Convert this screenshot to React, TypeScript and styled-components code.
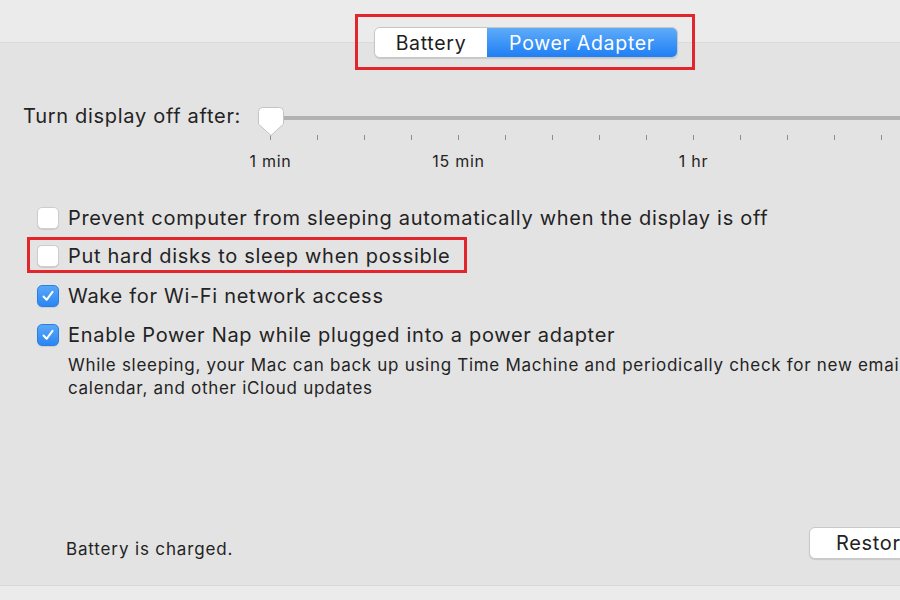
import React from "react";
import styled, { createGlobalStyle } from "styled-components";

const GlobalStyle = createGlobalStyle`
  html, body {
    margin: 0;
    padding: 0;
    overflow: hidden;
    background: #ebebeb;
  }
  body {
    font-family: Inter, Roboto, "Liberation Sans", sans-serif;
    color: #232323;
    letter-spacing: 0.7px;
  }
`;

const Viewport = styled.div`
  width: 900px;
  height: 600px;
  overflow: hidden;
`;

const Window = styled.div`
  width: 1050px;
  height: 600px;
  display: flex;
  flex-direction: column;
  background: #ebebeb;
`;

const TabHeader = styled.div`
  display: flex;
  justify-content: center;
  margin-top: 14px;
  margin-bottom: -28px;
  position: relative;
  z-index: 1;
`;

const Highlight = styled.div`
  border: 3px solid #e3262c;
  display: flex;
  padding: 10px 14px 9px 16px;
`;

const Segmented = styled.div`
  display: flex;
  height: 31px;
  border-radius: 6px;
  overflow: hidden;
  border: 1px solid #c6c6c6;
  box-shadow: 0 1px 1px rgba(0, 0, 0, 0.12);
  box-sizing: border-box;
`;

const Segment = styled.div<{ $active?: boolean }>`
  display: flex;
  align-items: center;
  justify-content: center;
  width: ${({ $active }) => ($active ? "190px" : "112px")};
  font-size: 19.5px;
  color: ${({ $active }) => ($active ? "#ffffff" : "#1d1d1d")};
  background: ${({ $active }) =>
    $active ? "linear-gradient(#5eabf9, #1f7ff5)" : "#ffffff"};
`;

const TabBox = styled.div`
  flex: 1;
  background: #e3e3e3;
  border-top: 1px solid #dadada;
  border-bottom: 1px solid #d8d8d8;
  display: flex;
  flex-direction: column;
  margin-bottom: 14px;
`;

const SliderRow = styled.div`
  display: flex;
  align-items: flex-start;
  padding-left: 23px;
  margin-top: 60px;
`;

const SliderLabel = styled.div`
  width: 235px;
  font-size: 20px;
  line-height: 26px;
  white-space: nowrap;
`;

const Slider = styled.div`
  flex: 1;
  margin-top: 4px;
  display: flex;
  flex-direction: column;
`;

const TrackArea = styled.div`
  position: relative;
  height: 28px;
`;

const Track = styled.div`
  margin-top: 9px;
  height: 4px;
  border-radius: 2px;
  background: #b2b2b2;
  margin-right: 30px;
`;

const Thumb = styled.svg`
  position: absolute;
  left: 0;
  top: 0;
`;

const TickRow = styled.div`
  display: flex;
  gap: 46px;
  padding-left: 12px;
`;

const Tick = styled.div`
  width: 1px;
  height: 5px;
  background: #8e8e8e;
`;

const TickLabels = styled.div`
  display: grid;
  grid-template-columns: repeat(16, 47px);
  margin-left: -11px;
  margin-top: 12px;
  font-size: 16px;
  line-height: 18px;
`;

const TickLabel = styled.div<{ $col: number }>`
  grid-column: ${({ $col }) => $col + 1};
  grid-row: 1;
  text-align: center;
  white-space: nowrap;
  justify-self: center;
`;

const CheckList = styled.div`
  display: flex;
  flex-direction: column;
  align-items: flex-start;
  padding-left: 37px;
  margin-top: 28px;
`;

const CheckRow = styled.div<{ $highlight?: boolean }>`
  display: flex;
  align-items: center;
  height: 39px;
  font-size: 20px;
  white-space: nowrap;
  box-sizing: border-box;
  ${({ $highlight }) =>
    $highlight &&
    `
    height: 36px;
    margin: 0 0 3px -10px;
    padding: 1px 14px 0 7px;
    border: 3px solid #e3262c;
  `}
`;

const Box = styled.div<{ $checked?: boolean }>`
  width: 22px;
  height: 22px;
  box-sizing: border-box;
  border-radius: 5px;
  margin-right: 9px;
  flex-shrink: 0;
  display: flex;
  align-items: center;
  justify-content: center;
  background: ${({ $checked }) =>
    $checked ? "linear-gradient(#5aa7f8, #2a86f3)" : "#ffffff"};
  border: 1px solid ${({ $checked }) => ($checked ? "#2c7fe0" : "#cdcdcd")};
  box-shadow: 0 1px 1px rgba(0, 0, 0, 0.1);
`;

const Description = styled.div`
  padding-left: 68px;
  font-size: 17px;
  line-height: 23px;
  white-space: nowrap;
`;

const Footer = styled.div`
  margin-top: auto;
  display: flex;
  align-items: center;
  padding: 0 0 26px 66px;
`;

const StatusText = styled.div`
  font-size: 17px;
  letter-spacing: 0.85px;
  margin-top: 12px;
`;

const Button = styled.button`
  margin-left: auto;
  margin-right: 20px;
  height: 32px;
  padding: 0 26px;
  font-family: inherit;
  letter-spacing: inherit;
  font-size: 20px;
  color: #232323;
  background: #ffffff;
  border: 1px solid #c8c8c8;
  border-radius: 6px;
  box-shadow: 0 1px 1px rgba(0, 0, 0, 0.12);
`;

const Check = () => (
  <svg width="14" height="14" viewBox="0 0 14 14">
    <path
      d="M2.5 7.5 L5.6 10.8 L11.5 2.8"
      fill="none"
      stroke="#ffffff"
      strokeWidth="2"
      strokeLinecap="round"
      strokeLinejoin="round"
    />
  </svg>
);

const Checkbox: React.FC<{ checked?: boolean }> = ({ checked }) => (
  <Box $checked={checked}>{checked && <Check />}</Box>
);

const ticks = Array.from({ length: 16 }, (_, i) => i);

const App: React.FC = () => {
  return (
    <Viewport>
      <GlobalStyle />
      <Window>
        <TabHeader>
          <Highlight>
            <Segmented>
              <Segment>Battery</Segment>
              <Segment $active>Power Adapter</Segment>
            </Segmented>
          </Highlight>
        </TabHeader>

        <TabBox>
          <SliderRow>
            <SliderLabel>Turn display off after:</SliderLabel>
            <Slider>
              <TrackArea>
                <Track />
                <Thumb width="26" height="30" viewBox="0 0 26 30">
                  <path
                    d="M4.5 0.5 H21.5 Q25.5 0.5 25.5 4.5 V17 L13 28.5 L0.5 17 V4.5 Q0.5 0.5 4.5 0.5 Z"
                    fill="#ffffff"
                    stroke="#c4c4c4"
                  />
                </Thumb>
              </TrackArea>
              <TickRow>
                {ticks.map((t) => (
                  <Tick key={t} />
                ))}
              </TickRow>
              <TickLabels>
                <TickLabel $col={0}>1 min</TickLabel>
                <TickLabel $col={4}>15 min</TickLabel>
                <TickLabel $col={9}>1 hr</TickLabel>
              </TickLabels>
            </Slider>
          </SliderRow>

          <CheckList>
            <CheckRow>
              <Checkbox />
              Prevent computer from sleeping automatically when the display is off
            </CheckRow>
            <CheckRow $highlight>
              <Checkbox />
              Put hard disks to sleep when possible
            </CheckRow>
            <CheckRow>
              <Checkbox checked />
              Wake for Wi-Fi network access
            </CheckRow>
            <CheckRow>
              <Checkbox checked />
              Enable Power Nap while plugged into a power adapter
            </CheckRow>
          </CheckList>
          <Description>
            While sleeping, your Mac can back up using Time Machine and
            periodically check for new email,
            <br />
            calendar, and other iCloud updates
          </Description>

          <Footer>
            <StatusText>Battery is charged.</StatusText>
            <Button>Restore Defaults</Button>
          </Footer>
        </TabBox>
      </Window>
    </Viewport>
  );
};

export default App;
